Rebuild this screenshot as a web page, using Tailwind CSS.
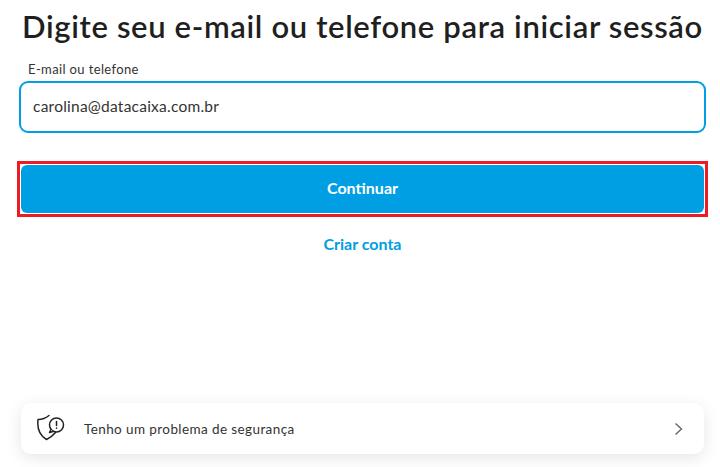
<!DOCTYPE html>
<html lang="pt-BR">
<head>
<meta charset="utf-8">
<title>Iniciar sessão</title>
<script src="https://cdn.jsdelivr.net/npm/@tailwindcss/browser@4"></script>
</head>
<body class="bg-white overflow-hidden">
<main class="w-[725px] h-[467px] overflow-hidden flex flex-col font-['Lato','Liberation_Sans',sans-serif] text-[#222]">
  <h1 class="mt-[8px] h-[36px] leading-[36px] text-center text-[31px] font-semibold tracking-[0.65px] whitespace-nowrap text-[#1f1f1f]">Digite seu e-mail ou telefone para iniciar sessão</h1>
  <label class="mt-[17px] ml-[28px] h-[16px] leading-[16px] text-[13px] tracking-[0.37px] text-[#333]">E-mail ou telefone</label>
  <div class="mt-[4px] mx-[19px] h-[52px] border-2 border-[#009ee3] rounded-[9px] flex items-center pl-[12px] text-[15.5px] tracking-[0.24px] text-[#333]">carolina@datacaixa.com.br</div>
  <div class="mt-[28px] mx-[17px] h-[56px] border-[3px] border-[#ed1c24] p-px">
    <button class="w-full h-full bg-[#009ee3] rounded-[6px] pb-[2px] text-white text-[16px] font-bold">Continuar</button>
  </div>
  <a class="mt-[17px] h-[20px] leading-[20px] text-center text-[16px] font-bold text-[#009ee3]">Criar conta</a>
  <div class="mt-auto mb-[13px] mx-[21px] h-[51px] bg-white rounded-[10px] shadow-[0_4px_16px_rgba(0,0,0,0.1)] flex items-center pl-[15px] pr-[19px]">
    <svg class="w-[30px] h-[30px]" viewBox="0 0 30 30" fill="none" stroke="#222" stroke-width="1.5" stroke-linecap="round" stroke-linejoin="round">
      <path d="M13 1.5 C10 4 6 5.5 2 5.5 C1 14 3 21 10.5 25.5 C14 24 17 21.5 19.5 18.5"/>
      <circle cx="20.5" cy="11" r="7"/>
      <path d="M15 15.5 L13.5 18.5 L17 17.5" fill="#fff"/>
      <path d="M20.5 7.5 V11.5"/>
      <path d="M20.5 14 V14.2"/>
    </svg>
    <span class="ml-[18px] pt-[2px] text-[13.5px] tracking-[0.4px] text-[#333]">Tenho um problema de segurança</span>
    <svg class="ml-auto w-[12px] h-[16px]" viewBox="0 0 12 16" fill="none" stroke="#666" stroke-width="1.4"><path d="M2.5 2.5 L8.5 8 L2.5 13.5"/></svg>
  </div>
</main>
</body>
</html>
